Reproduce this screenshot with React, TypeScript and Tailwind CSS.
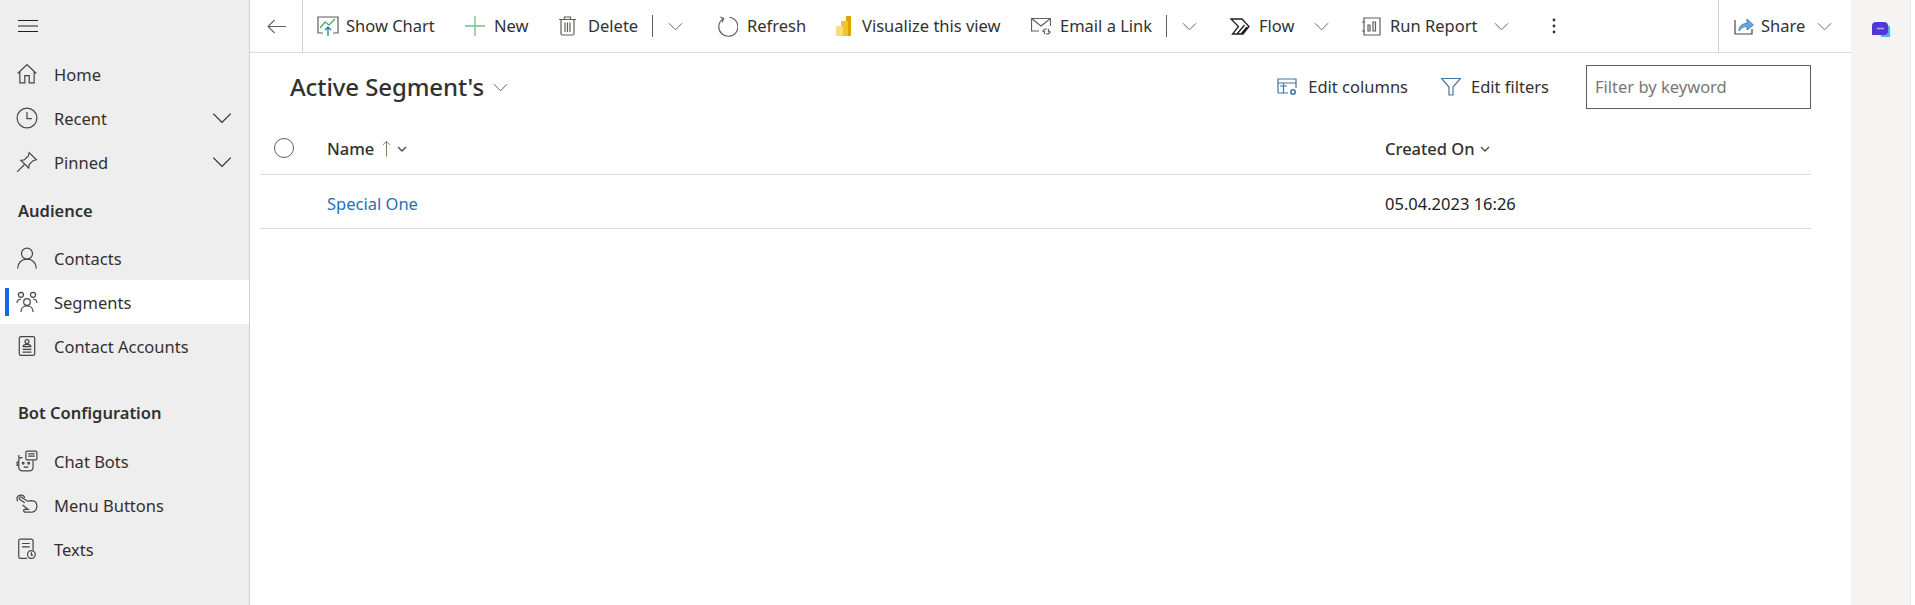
import type { ReactNode } from 'react';

const font = "font-['Noto_Sans','Open_Sans',sans-serif]";

function Chevron({ className = 'w-[15px] h-[15px] text-[#605e5c]' }: { className?: string }) {
  return (
    <svg viewBox="0 0 16 16" className={className} fill="none" stroke="currentColor" strokeWidth="1">
      <path d="M1 4.500 8 11.500 15 4.500" />
    </svg>
  );
}

const stroke = { fill: 'none', stroke: 'currentColor', strokeWidth: 1.1 };

function NavIcon({ name }: { name: string }) {
  const cls = 'w-[22px] h-[22px] text-[#484644]';
  switch (name) {
    case 'home':
      return (
        <svg viewBox="0 0 20 20" className={cls} {...stroke}>
          <path d="M1.500 9.500 10 1.500l8.500 8M3.500 8v10h4.500v-6.500h4V18h4.500V8" />
        </svg>
      );
    case 'recent':
      return (
        <svg viewBox="0 0 20 20" className={cls} {...stroke}>
          <circle cx="10" cy="10" r="9" />
          <path d="M10 4.500V10.500H14.500" />
        </svg>
      );
    case 'pinned':
      return (
        <svg viewBox="0 0 20 20" className={cls} {...stroke}>
          <path d="M12 1.500 18.500 8l-3 .8-3.500 3.500-.5 3.200L4.500 8.500l3.200-.5 3.500-3.500zM7.500 12.500 1 19" />
        </svg>
      );
    case 'contacts':
      return (
        <svg viewBox="0 0 20 20" className={cls} {...stroke}>
          <circle cx="10" cy="6" r="5" />
          <path d="M1.500 19.500c0-5 3.500-8.500 8.500-8.500s8.500 3.500 8.500 8.500" />
        </svg>
      );
    case 'segments':
      return (
        <svg viewBox="0 0 20 20" className={cls} {...stroke}>
          <circle cx="4.500" cy="3.500" r="2.300" />
          <circle cx="15.500" cy="3.500" r="2.300" />
          <circle cx="10" cy="10" r="3" />
          <path d="M1 11c0-2 1.500-3.500 3.500-3.500M19 11c0-2-1.500-3.500-3.500-3.500M4.500 19c0-3.500 2.500-5.500 5.500-5.500s5.500 2 5.500 5.500" />
        </svg>
      );
    case 'accounts':
      return (
        <svg viewBox="0 0 20 20" className={cls} {...stroke}>
          <rect x="3" y="1.500" width="14" height="17" rx="1.500" />
          <circle cx="10" cy="6" r="1.800" />
          <path d="M6.500 10.500c0-1.500 1.500-2 3.500-2s3.500.5 3.500 2zM6 13h8M6 15.500h8" />
        </svg>
      );
    case 'bots':
      return (
        <svg viewBox="0 0 20 20" className={cls} {...stroke}>
          <rect x="9" y="1" width="10" height="8" rx="1" />
          <path d="M11 3.500h6M11 5.500h6M6 7H4.500C3 7 2.500 8 2.500 9.500v6C2.500 17.500 4 19 6 19h6c2 0 3.500-1.500 3.500-3.500V9.500M2.500 11H1v3h1.500M2.500 7V4.500" />
          <circle cx="6.500" cy="12" r=".8" />
          <circle cx="11.500" cy="12" r=".8" />
          <path d="M7 15c1 1 3 1 4 0" />
        </svg>
      );
    case 'buttons':
      return (
        <svg viewBox="0 0 20 20" className={cls} {...stroke}>
          <path d="M8 8 3.500 5C2 4 3.500 2 5 3l5.500 3.500 3.500-.5c3 0 5 2 5 5 0 4-3 6-6 5.500H8c-1.500-.5-1.500-2.500 0-2.500h3L8.500 12 6 10M1.500 6.500C0 3.500 1.500 1 4.500 1 6 1 7.500 2 8 3.500" />
        </svg>
      );
    default:
      return (
        <svg viewBox="0 0 20 20" className={cls} {...stroke}>
          <path d="M10 18.500H4a1.500 1.500 0 0 1-1.500-1.500V2.500A1.500 1.500 0 0 1 4 1h10a1.500 1.500 0 0 1 1.500 1.500V11M5.500 5h7M5.500 8h7" />
          <circle cx="14" cy="15" r="3.500" />
          <path d="M14 13v2.500h1.500" />
        </svg>
      );
  }
}

function NavItem({ icon, label, expand, active }: { icon: string; label: string; expand?: boolean; active?: boolean }) {
  return (
    <div className={`relative flex items-center h-[44px] pl-[16px] pr-[17px] ${active ? 'bg-white' : ''}`}>
      {active && <div className="absolute left-[5px] top-[8px] w-[4px] h-[28px] bg-[#0f6cde]" />}
      <NavIcon name={icon} />
      <span className="ml-[16px] flex-1 pt-[3px] text-[16.5px] text-[#323130]">{label}</span>
      {expand && <Chevron className="w-[20px] h-[20px] text-[#323130]" />}
    </div>
  );
}

function GroupTitle({ label, className }: { label: string; className: string }) {
  return <div className={`pl-[18px] text-[16.5px] leading-[24px] font-semibold text-[#323130] ${className}`}>{label}</div>;
}

function Sidebar() {
  return (
    <aside className="w-[250px] shrink-0 border-r border-[#d2d0ce] bg-[#eeeeee]">
      <div className="flex h-[52px] items-center pl-[18px]">
        <svg viewBox="0 0 20 12" className="w-[20px] h-[12px] text-[#201f1e]" fill="none" stroke="currentColor" strokeWidth="1">
          <path d="M0 .5h20M0 6h20M0 11.500h20" />
        </svg>
      </div>
      <NavItem icon="home" label="Home" />
      <NavItem icon="recent" label="Recent" expand />
      <NavItem icon="pinned" label="Pinned" expand />
      <GroupTitle label="Audience" className="mt-[15px] mb-[13px]" />
      <NavItem icon="contacts" label="Contacts" />
      <NavItem icon="segments" label="Segments" active />
      <NavItem icon="accounts" label="Contact Accounts" />
      <GroupTitle label="Bot Configuration" className="mt-[33px] mb-[14px]" />
      <NavItem icon="bots" label="Chat Bots" />
      <NavItem icon="buttons" label="Menu Buttons" />
      <NavItem icon="texts" label="Texts" />
    </aside>
  );
}

function ToolItem({ icon, label, width }: { icon: ReactNode; label: string; width: string }) {
  return (
    <div className={`flex h-full items-center ${width}`}>
      {icon}
      <span className="text-[16.5px] text-[#323130] whitespace-nowrap">{label}</span>
    </div>
  );
}

const iconStroke = { fill: 'none', stroke: '#605e5c', strokeWidth: 1.2 };

function Toolbar() {
  return (
    <div className="flex h-[53px] shrink-0 items-stretch border-b border-[#dddddd]">
      <div className="flex w-[53px] items-center justify-center border-r border-[#d2d0ce]">
        <svg viewBox="0 0 20 16" className="w-[19px] h-[15px]" fill="none" stroke="#605e5c" strokeWidth="1.2">
          <path d="M20 8H1M8 1 1 8l7 7" />
        </svg>
      </div>
      <ToolItem
        width="ml-[14px] w-[148px]"
        label="Show Chart"
        icon={
          <svg viewBox="0 0 22 20" className="w-[22px] h-[20px] mr-[7px]" fill="none" strokeWidth="1.200">
            <path d="M6 17H1V1h20v16h-5" stroke="#605e5c" />
            <path d="M3 12 8 6l4 3 6-6" stroke="#3fa45b" />
            <path d="M11 20v-9M8 14l3-3 3 3" stroke="#1b6fb5" />
          </svg>
        }
      />
      <ToolItem
        width="w-[94px]"
        label="New"
        icon={
          <svg viewBox="0 0 20 20" className="w-[20px] h-[20px] mr-[9px]" fill="none" stroke="#6cc48a" strokeWidth="1.300">
            <path d="M10 0v20M0 10h20" />
          </svg>
        }
      />
      <ToolItem
        width="w-[93px]"
        label="Delete"
        icon={
          <svg viewBox="0 0 17 20" className="w-[17px] h-[20px] mr-[12px]" {...iconStroke}>
            <path d="M0 3.500h17M2 3.500v14A1.500 1.500 0 0 0 3.500 19h10a1.500 1.500 0 0 0 1.500-1.500v-14M5.500 3.500V1h6v2.500M6 6.500V16M8.500 6.500V16M11 6.500V16" />
          </svg>
        }
      />
      <div className="my-[15px] w-px bg-[#605e5c]" />
      <div className="flex w-[64px] items-center pl-[15px]"><Chevron /></div>
      <ToolItem
        width="w-[119px]"
        label="Refresh"
        icon={
          <svg viewBox="0 0 22 22" className="w-[21px] h-[21px] mr-[9px]" {...iconStroke}>
            <path d="M7 2.500A10 10 0 1 0 13 1.300M3.500 1 7 2.500 5.500 6.500" />
          </svg>
        }
      />
      <ToolItem
        width="w-[195px]"
        label="Visualize this view"
        icon={
          <svg viewBox="0 0 15 20" className="w-[15px] h-[20px] mr-[11px]">
            <rect x="10" y="0" width="5" height="20" rx="1" fill="#d9a300" />
            <rect x="5" y="5" width="7" height="15" rx="1" fill="#efc431" />
            <rect x="0" y="10" width="7" height="10" rx="1" fill="#f7de7b" />
          </svg>
        }
      />
      <ToolItem
        width="w-[135px]"
        label="Email a Link"
        icon={
          <svg viewBox="0 0 20 19" className="w-[20px] h-[19px] mr-[9px]" {...iconStroke}>
            <path d="M8 14H.5V1.500h19V9M.5 1.500 10 9l9.500-7.500" />
            <path d="M12 15a3 3 0 0 1 3-3h1M19 14a3 3 0 0 1-3 3h-1M14 17a2 2 0 0 1 0-3M17 12a2 2 0 0 1 0 3" />
          </svg>
        }
      />
      <div className="my-[15px] w-px bg-[#605e5c]" />
      <div className="flex w-[63px] items-center pl-[15px]"><Chevron /></div>
      <ToolItem
        width="w-[84px]"
        label="Flow"
        icon={
          <svg viewBox="0 0 20 17" className="w-[20px] h-[17px] mr-[9px]" fill="none" stroke="#201f1e" strokeWidth="1.300">
            <path d="M1 1h11l7 7.500-6 7.500H2.500l6-7.500zM7 16l7.500-9M11 16l6-7" />
          </svg>
        }
      />
      <div className="flex w-[48px] items-center"><Chevron /></div>
      <ToolItem
        width="w-[132px]"
        label="Run Report"
        icon={
          <svg viewBox="0 0 19 19" className="w-[19px] h-[19px] mr-[9px]" {...iconStroke}>
            <path d="M0 5h3M0 14h3M2 1h16v17H2zM6 8h2v6H6zM11 5h2.500v9H11z" />
          </svg>
        }
      />
      <div className="flex w-[53px] items-center"><Chevron /></div>
      <div className="flex w-[171px] items-center pl-[5px]">
        <svg viewBox="0 0 4 16" className="w-[4px] h-[16px]" fill="#323130">
          <circle cx="2" cy="2" r="1.400" />
          <circle cx="2" cy="8" r="1.400" />
          <circle cx="2" cy="14" r="1.400" />
        </svg>
      </div>
      <div className="flex flex-1 items-center border-l border-[#d2d0ce] pl-[15px]">
        <svg viewBox="0 0 20 18" className="w-[20px] h-[18px] mr-[7px]">
          <path d="M1 3v14h17v-5" fill="none" stroke="#484644" strokeWidth="1.200" />
          <path d="M5 14c0-5 3-7.500 8-7.500V2l6.500 6-6.500 5V9.500c-4 0-6 1.500-8 4.500z" fill="#6aa9da" stroke="#2f76b5" strokeWidth=".8" />
        </svg>
        <span className="text-[16.5px] text-[#323130]">Share</span>
        <div className="ml-[12px]"><Chevron /></div>
      </div>
    </div>
  );
}

function ViewHeader() {
  return (
    <div className="flex h-[66px] shrink-0 items-center pt-[2px] pl-[40px] pr-[40px]">
      <h1 className="text-[24px] font-medium tracking-[-0.1px] text-[#323130]">Active Segment's</h1>
      <div className="ml-[9px] mt-[1px]"><Chevron /></div>
      <div className="ml-auto flex items-center">
        <svg viewBox="0 0 20 18" className="w-[20px] h-[18px] mr-[11px]" fill="none" stroke="#44739e" strokeWidth="1.200">
          <path d="M11 15H1V1h18v9M1 5h18M6.500 5v10M3 8h7" />
          <circle cx="16" cy="14" r="2.200" strokeWidth="1.600" />
        </svg>
        <span className="text-[16.5px] text-[#323130]">Edit columns</span>
        <svg viewBox="0 0 20 18" className="ml-[33px] w-[20px] h-[18px] mr-[10px]" fill="none" stroke="#44739e" strokeWidth="1.200">
          <path d="M.5.500h19L12 9v8H8V9z" />
        </svg>
        <span className="text-[16.5px] text-[#323130]">Edit filters</span>
        <div className="ml-[37px] flex h-[44px] w-[225px] items-center border border-[#605e5c] bg-white pl-[8px] text-[16.5px] text-[#797775]">
          Filter by keyword
        </div>
      </div>
    </div>
  );
}

function SegmentTable() {
  return (
    <div className="ml-[10px] mr-[40px]">
      <div className="flex h-[56px] items-center border-b border-[#dddddd] text-[16.5px] font-medium text-[#323130]">
        <div className="flex w-[67px] items-center pl-[14px] pt-[3px]">
          <div className="h-[20px] w-[20px] rounded-full border border-[#605e5c]" />
        </div>
        <div className="flex w-[1058px] items-center pt-[6px]">
          <span>Name</span>
          <svg viewBox="0 0 10 18" className="ml-[8px] mb-[2px] w-[9px] h-[17px]" fill="none" stroke="#7f7a5e" strokeWidth="1.100">
            <path d="M5 18V1M1 5l4-4 4 4" />
          </svg>
          <svg viewBox="0 0 10 6" className="ml-[6px] mb-[2px] w-[10px] h-[6px]" fill="none" stroke="#484644" strokeWidth="1.300">
            <path d="M1 1l4 4 4-4" />
          </svg>
        </div>
        <div className="flex items-center pt-[6px]">
          <span>Created On</span>
          <svg viewBox="0 0 10 6" className="ml-[5px] mb-[2px] w-[10px] h-[6px]" fill="none" stroke="#484644" strokeWidth="1.300">
            <path d="M1 1l4 4 4-4" />
          </svg>
        </div>
      </div>
      <div className="flex h-[54px] items-center border-b border-[#dddddd] pt-[5px] text-[16.5px]">
        <div className="w-[67px]" />
        <div className="w-[1058px] text-[#1f72b5]">Special One</div>
        <div className="text-[#201f1e]">05.04.2023 16:26</div>
      </div>
    </div>
  );
}

export default function App() {
  return (
    <div className={`flex h-[605px] w-[1915px] overflow-hidden bg-white ${font}`}>
      <Sidebar />
      <main className="flex w-[1601px] flex-col">
        <Toolbar />
        <ViewHeader />
        <SegmentTable />
      </main>
      <div className="flex w-[60px] justify-center border-r border-[#eaeaea] bg-[#f5f4f3] pt-[22px]">
        <svg viewBox="0 0 18 15" className="w-[18px] h-[15px]">
          <path d="M7 3h8a3 3 0 0 1 3 3v9H9z" fill="#4fb2ef" />
          <path d="M4 0h8a4 4 0 0 1 4 4v5a4 4 0 0 1-4 4H0V4a4 4 0 0 1 4-4z" fill="#5138d6" />
          <path d="M5 6.500h7" stroke="#b7a9f2" strokeWidth="1.500" />
        </svg>
      </div>
    </div>
  );
}
